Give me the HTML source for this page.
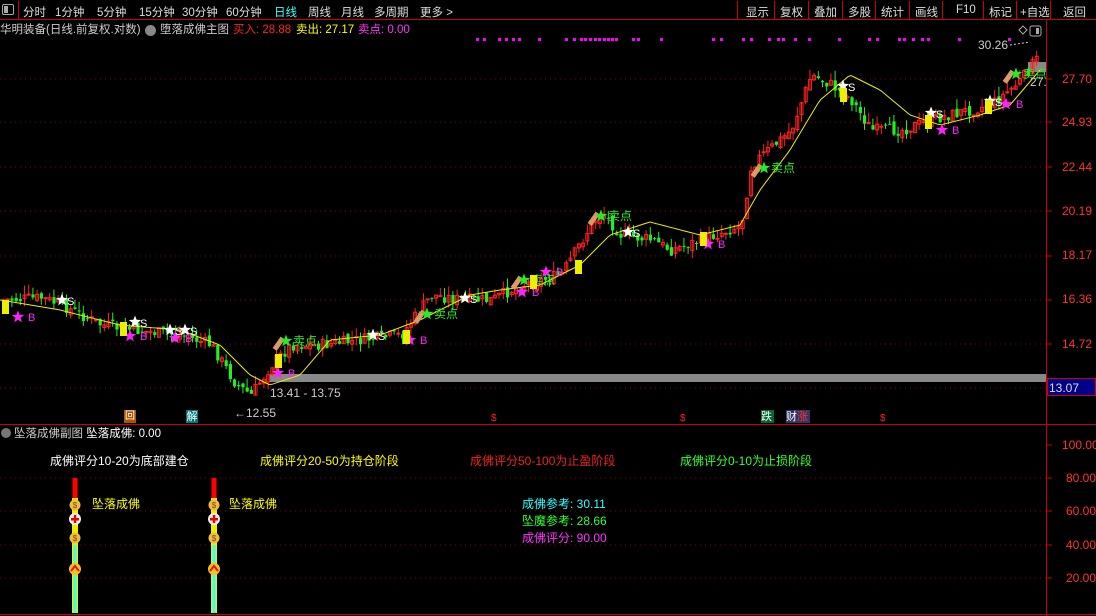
<!DOCTYPE html>
<html><head><meta charset="utf-8"><style>
*{margin:0;padding:0;box-sizing:border-box}
body{width:1096px;height:616px;background:#000;overflow:hidden;position:relative;font-family:"Liberation Sans","Noto Sans CJK SC",sans-serif;color:#ccc}
.t{position:absolute;white-space:nowrap;font-size:12px;line-height:14px}
#tb{position:absolute;left:0;top:0;width:1096px;height:20px;border-bottom:1px solid #c00}
.tb{position:absolute;top:4px;font-size:11.5px;color:#ddd}
.sep{position:absolute;top:1px;width:1px;height:19px;background:#c00}
.ax{position:absolute;left:1062px;font-size:12px;color:#f33}
</style></head><body>
<div id="tb">
<div style="position:absolute;left:2px;top:4px;width:12px;height:11px;border:1px solid #aaa;border-radius:2px"><div style="position:absolute;left:1px;top:1px;width:4px;height:7px;background:#aaa"></div></div>
<div class="sep" style="left:18px"></div>
<span class="tb" style="left:23px">分时</span><span class="tb" style="left:55px">1分钟</span><span class="tb" style="left:97px">5分钟</span><span class="tb" style="left:139px">15分钟</span><span class="tb" style="left:182px">30分钟</span><span class="tb" style="left:226px">60分钟</span><span class="tb" style="left:274px;color:#3ff">日线</span><span class="tb" style="left:308px">周线</span><span class="tb" style="left:341px">月线</span><span class="tb" style="left:374px">多周期</span><span class="tb" style="left:420px">更多 &gt;</span>
<div class="sep" style="left:737px"></div><span class="tb" style="left:746px">显示</span>
<div class="sep" style="left:774px"></div><span class="tb" style="left:780px">复权</span>
<div class="sep" style="left:808px"></div><span class="tb" style="left:814px">叠加</span>
<div class="sep" style="left:842px"></div><span class="tb" style="left:848px">多股</span>
<div class="sep" style="left:875px"></div><span class="tb" style="left:881px">统计</span>
<div class="sep" style="left:909px"></div><span class="tb" style="left:915px">画线</span>
<div class="sep" style="left:942px"></div><span class="tb" style="left:956px">F10</span>
<div class="sep" style="left:983px"></div><span class="tb" style="left:989px">标记</span>
<div class="sep" style="left:1016px"></div><span class="tb" style="left:1020px">+自选</span>
<div class="sep" style="left:1050px"></div><span class="tb" style="left:1063px">返回</span>
</div>
<div class="t" style="left:0;top:23px;font-size:11.5px;color:#ccc">华明装备(日线.前复权.对数)</div>
<div style="position:absolute;left:145px;top:25px;width:11px;height:11px;border-radius:50%;background:#888"></div>
<div class="t" style="left:160px;top:23px;font-size:11.5px;color:#ccc">堕落成佛主图</div>
<div class="t" style="left:233px;top:23px;font-size:11.5px;color:#f22">买入: 28.88</div>
<div class="t" style="left:296px;top:23px;font-size:11.5px;color:#ff0">卖出: 27.17</div>
<div class="t" style="left:358px;top:23px;font-size:11.5px;color:#f3f">卖点: 0.00</div>
<svg id="ch" width="1096" height="616" style="position:absolute;left:0;top:0"></svg>
<div style="position:absolute;left:1046px;top:20px;width:1px;height:596px;background:#c00"></div>
<div style="position:absolute;left:0;top:424px;width:1096px;height:1px;background:#c00"></div>
<div style="position:absolute;left:0;top:614px;width:1096px;height:1px;background:#c00"></div>
<div class="ax" style="top:72px">27.70</div><div class="ax" style="top:115px">24.93</div><div class="ax" style="top:160px">22.44</div><div class="ax" style="top:204px">20.19</div><div class="ax" style="top:248px">18.17</div><div class="ax" style="top:292px">16.36</div><div class="ax" style="top:337px">14.72</div>
<div style="position:absolute;left:1047px;top:378px;width:49px;height:18px;background:#00008a;border:1px solid #c00;color:#ddd;font-size:12px;padding:2px 0 0 1px">13.07</div>
<div class="ax" style="top:438px">100.00</div><div class="ax" style="top:471px;left:1066px">80.00</div><div class="ax" style="top:504px;left:1066px">60.00</div><div class="ax" style="top:538px;left:1066px">40.00</div><div class="ax" style="top:571px;left:1066px">20.00</div>
<div class="t" style="left:978px;top:38px;color:#ccc">30.26</div>
<div class="t" style="left:1030px;top:75px;color:#ccc">27.</div>
<div class="t" style="left:234px;top:406px;color:#ccc">←12.55</div>
<div class="t" style="left:270px;top:386px;color:#ccc">13.41 - 13.75</div>
<div class="t" style="left:124px;top:410px;width:12px;height:13px;background:#a50;color:#fff;font-size:10px;text-align:center">回</div>
<div class="t" style="left:186px;top:410px;width:12px;height:13px;background:#077;color:#fff;font-size:11px;text-align:center">解</div>
<div class="t" style="left:761px;top:410px;width:13px;height:13px;background:#063;color:#fff;font-size:11px">跌</div>
<div class="t" style="left:786px;top:410px;width:24px;height:13px;background:#336;color:#fff;font-size:11px">财<span style="color:#f33">涨</span></div>
<div style="position:absolute;left:1px;top:428px;width:10px;height:10px;border-radius:50%;background:#777"></div>
<div class="t" style="left:14px;top:427px;font-size:11.5px;color:#ccc">坠落成佛副图 <span style="color:#fff">坠落成佛: 0.00</span></div>
<div class="t" style="left:50px;top:454px;font-size:12px;color:#fff">成佛评分10-20为底部建仓</div>
<div class="t" style="left:260px;top:454px;font-size:12px;color:#ff0">成佛评分20-50为持仓阶段</div>
<div class="t" style="left:470px;top:454px;font-size:12px;color:#e22">成佛评分50-100为止盈阶段</div>
<div class="t" style="left:680px;top:454px;font-size:12px;color:#3f3">成佛评分0-10为止损阶段</div>
<div class="t" style="left:92px;top:497px;font-size:12px;color:#ff0">坠落成佛</div>
<div class="t" style="left:229px;top:497px;font-size:12px;color:#ff0">坠落成佛</div>
<div class="t" style="left:522px;top:497px;color:#3ff">成佛参考: 30.11</div>
<div class="t" style="left:522px;top:514px;color:#3f3">坠魔参考: 28.66</div>
<div class="t" style="left:522px;top:531px;color:#f3f">成佛评分: 90.00</div>
<script>
const s=document.getElementById('ch');let h='';
const G=[79,122,167,211,256,300,344,388];
G.forEach(y=>h+=`<line x1="0" y1="${y}" x2="1046" y2="${y}" stroke="#800" stroke-dasharray="1,4"/>`);
[478,511,545,578].forEach(y=>h+=`<line x1="0" y1="${y}" x2="1046" y2="${y}" stroke="#800" stroke-dasharray="1,4"/>`);
G.forEach(y=>h+=`<line x1="1046" y1="${y}" x2="1052" y2="${y}" stroke="#c00"/>`);
[445,478,511,545,578].forEach(y=>h+=`<line x1="1046" y1="${y}" x2="1052" y2="${y}" stroke="#c00"/>`);
h+=`<rect x="270" y="374" width="776" height="8" fill="#888"/>`;
h+=`<rect x="1028" y="62" width="18" height="10" fill="#888"/>`;
const P=[[0,300],[40,298],[60,305],[100,325],[130,330],[180,335],[210,345],[235,385],[250,395],[270,365],[290,345],[320,345],[360,340],[400,335],[430,295],[460,300],[490,300],[520,285],[560,275],[590,225],[600,212],[620,235],[650,240],[670,250],[700,240],[740,225],[750,165],[790,130],[810,75],[830,85],[850,100],[870,130],[900,130],[930,120],[960,112],[990,105],[1020,80],[1034,60]];
const M=[[0,300],[60,310],[120,325],[180,330],[220,345],[250,375],[270,385],[300,375],[330,340],[380,335],[420,320],[470,295],[500,290],[540,285],[580,265],[610,235],[650,222],[700,235],[740,225],[760,190],[790,150],[820,100],[850,75],[880,90],[910,115],[940,125],[980,115],[1010,105],[1040,70]];
function f(A,x){for(let i=1;i<A.length;i++)if(x<=A[i][0]){const a=A[i-1],b=A[i];return a[1]+(b[1]-a[1])*(x-a[0])/(b[0]-a[0]);}return A[A.length-1][1];}
let seed=7;function r(){seed=(seed*9301+49297)%233280;return seed/233280;}
let prev=f(P,0);
for(let x=2;x<1036;x+=4.2){const slope=f(P,x+4)-f(P,x);const c=f(P,x)+(r()-0.5)*12;const o=prev+(r()-0.5)*6;const up=c<o;const top=Math.min(o,c)-r()*10,bot=Math.max(o,c)+r()*8;
const col=up?'#f22':'#2e2';h+=`<line x1="${x+1.5}" y1="${top}" x2="${x+1.5}" y2="${bot}" stroke="${col}"/>`;
h+=up?`<rect x="${x}" y="${Math.min(o,c)}" width="3" height="${Math.max(1,Math.abs(c-o))}" fill="none" stroke="${col}" stroke-width="1"/>`:`<rect x="${x}" y="${Math.min(o,c)}" width="3.2" height="${Math.max(1,Math.abs(c-o))}" fill="${col}"/>`;prev=c;}
let d='M0 300';for(let x=2;x<=1040;x+=3)d+=` L${x} ${f(M,x).toFixed(1)}`;
h+=`<path d="${d}" fill="none" stroke="#ee0" stroke-width="1"/>`;
function star(x,y,c){let p='';for(let i=0;i<10;i++){const a=-Math.PI/2+i*Math.PI/5,R=i%2?2.7:6.5;p+=(x+R*Math.cos(a)).toFixed(1)+','+(y+R*Math.sin(a)).toFixed(1)+' ';}return `<polygon points="${p}" fill="${c}"/>`;}
const W=[[62,300],[135,322],[170,330],[185,330],[373,335],[465,298],[628,232],[843,86],[931,113],[990,101]];
W.forEach(([x,y])=>{h+=star(x,y,'#fff')+`<text x="${x+5}" y="${y+5}" fill="#fff" font-size="11" font-family="Liberation Sans">S</text>`;});
const B=[[18,317],[130,336],[175,338],[278,373],[410,340],[522,292],[546,272],[708,244],[942,130],[1006,104]];
B.forEach(([x,y])=>{h+=star(x,y,'#f2f')+`<text x="${x+10}" y="${y+4}" fill="#f2f" font-size="11" font-family="Liberation Sans">B</text>`;});
const S=[[286,341],[427,314],[524,280],[601,216],[764,168],[1016,74]];
S.forEach(([x,y])=>{h+=`<rect x="${x-8}" y="${y-4}" width="5" height="14" fill="#d96" transform="rotate(35 ${x-6} ${y})"/>`+star(x,y,'#2e2')+`<text x="${x+7}" y="${y+4}" fill="#2e2" font-size="12" font-family="Liberation Sans,Noto Sans CJK SC">卖点</text>`;});
[[2,300],[120,322],[275,354],[403,330],[530,275],[575,260],[700,232],[840,88],[925,115],[985,100]].forEach(([x,y])=>h+=`<rect x="${x}" y="${y}" width="7" height="14" fill="#ee0"/>`);
[476,483,498,505,512,518,538,565,573,580,584,589,594,598,603,607,611,615,632,637,660,712,720,742,750,768,777,782,794,808,838,868,876,898,903,912,921,927,958].forEach(x=>h+=`<rect x="${x}" y="38" width="3" height="3" fill="#f0f"/>`);
h+=`<rect x="1008" y="38" width="3" height="3" fill="#f0f"/>`;
[75,214].forEach(x=>{h+=`<rect x="${x-2.5}" y="478" width="5" height="20" fill="#f00"/><rect x="${x-3}" y="498" width="6" height="115" fill="#ee0"/><rect x="${x-1.5}" y="545" width="3" height="68" fill="#3ff"/>`;
[[505,'#eb4'],[538,'#eb4']].forEach(([y,c])=>h+=`<circle cx="${x}" cy="${y}" r="5.5" fill="${c}"/><text x="${x}" y="${y+3}" fill="#840" font-size="8" text-anchor="middle" font-family="Liberation Sans">$</text>`);
h+=`<circle cx="${x}" cy="519" r="6" fill="#eee"/><rect x="${x-4}" y="518" width="8" height="2.5" fill="#e00"/><rect x="${x-1.2}" y="515" width="2.5" height="8" fill="#e00"/>`;
h+=`<circle cx="${x}" cy="569" r="6" fill="#fb2"/><path d="M${x-4} ${571} L${x} ${566} L${x+4} ${571}" stroke="#c20" stroke-width="2" fill="none"/>`;});
[491,680,880].forEach(x=>h+=`<text x="${x}" y="421" fill="#f22" font-size="10" font-family="Liberation Sans">$</text>`);
h+=`<path d="M1010 45 L1030 42" stroke="#ccc" stroke-dasharray="2,2"/><path d="M1033 14 l4 -4 l4 4 l-4 4z" fill="none" stroke="#aaa" transform="translate(-14 16)"/>`;
h+=`<rect x="1030" y="26" width="11" height="10" rx="2" fill="none" stroke="#aaa"/><rect x="1036" y="28" width="3" height="6" fill="#aaa"/>`;
s.innerHTML=h;
</script>
</body></html>
